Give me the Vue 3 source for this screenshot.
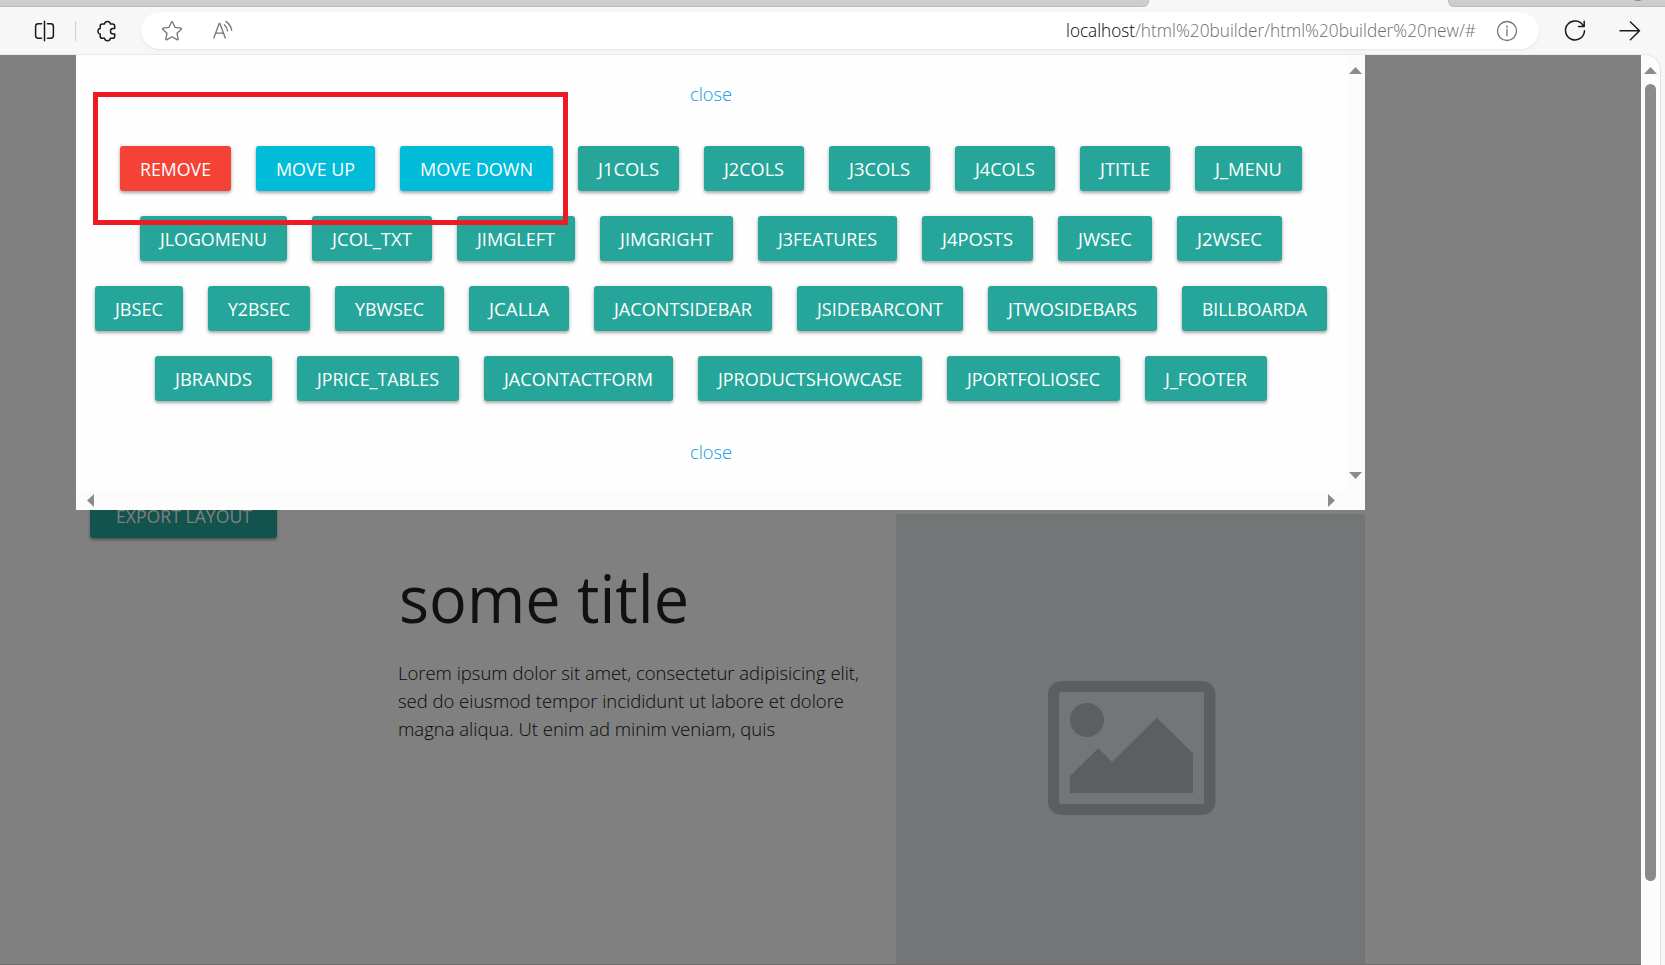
<script setup>
import { h } from 'vue'

const rows = [
  [['REMOVE', 111, 'red'], ['MOVE UP', 119, 'cyan'], ['MOVE DOWN', 153, 'cyan'], ['J1COLS', 101], ['J2COLS', 100], ['J3COLS', 101], ['J4COLS', 100], ['JTITLE', 90], ['J_MENU', 107]],
  [['JLOGOMENU', 147], ['JCOL_TXT', 120], ['JIMGLEFT', 118], ['JIMGRIGHT', 133], ['J3FEATURES', 139], ['J4POSTS', 111], ['JWSEC', 94], ['J2WSEC', 105]],
  [['JBSEC', 88], ['Y2BSEC', 102], ['YBWSEC', 109], ['JCALLA', 100], ['JACONTSIDEBAR', 178], ['JSIDEBARCONT', 166], ['JTWOSIDEBARS', 169], ['BILLBOARDA', 145]],
  [['JBRANDS', 117], ['JPRICE_TABLES', 162], ['JACONTACTFORM', 189], ['JPRODUCTSHOWCASE', 224], ['JPORTFOLIOSEC', 173], ['J_FOOTER', 122]],
]

const paragraph = [
  ['Lorem ipsum dolor sit amet, consectetur adipisicing elit,', 461],
  ['sed do eiusmod tempor incididunt ut labore et dolore', 446],
  ['magna aliqua. Ut enim ad minim veniam, quis', 377],
]

// A single line of text fitted to a fixed advance width.
const FitText = (props) =>
  h('svg', { width: props.w, height: props.h, class: 'fit' }, [
    h('text', { x: 0, y: props.base, textLength: props.w, lengthAdjust: 'spacingAndGlyphs', fill: 'currentColor' }, props.text),
  ])
FitText.props = ['text', 'w', 'h', 'base']
</script>

<template>
  <div class="browser">
    <div class="tabs">
      <div class="tab left"></div>
      <div class="tab right"><i class="tabdot"></i></div>
    </div>
    <header class="toolbar">
      <svg class="ico split" viewBox="0 0 24 24">
        <path d="M9.5 4.8H6.2Q3.6 4.8 3.6 7.4V16.6Q3.6 19.2 6.2 19.2H9.5M15.5 4.8H18.8Q21.4 4.8 21.4 7.4V16.6Q21.4 19.2 18.8 19.2H15.5M12.5 2.2V21.8" />
      </svg>
      <span class="sep"></span>
      <svg class="ico puzzle" viewBox="0 0 24 24">
        <path d="M5.2 7.2Q5.2 5.1 7.3 5.1H9.6C9.5 1.7 15.5 1.7 15.3 5.1H17.6Q19.7 5.1 19.7 7.2V9.6H18C14.6 9.6 14.6 15 18 15H19.7V17.2Q19.7 19.3 17.6 19.3H15.3C15.5 22.6 9.5 22.6 9.6 19.3H7.3Q5.2 19.3 5.2 17.2V14.9C2.2 15 2.2 9.5 5.2 9.6Z" />
      </svg>
      <div class="address">
        <svg class="ico star" viewBox="0 0 24 24">
          <path d="M12 2.7Q12.5 2.7 12.8 3.4L15.1 8.4L20.7 9.1Q22 9.4 21.1 10.4L17 14.2L18.1 19.8Q18.2 21.1 17 20.6L12 17.8L7 20.6Q5.8 21.1 5.9 19.8L7 14.2L2.9 10.4Q2 9.4 3.3 9.1L8.9 8.4L11.2 3.4Q11.5 2.7 12 2.7Z" />
        </svg>
        <svg class="ico read" viewBox="0 0 24 24">
          <path d="M3.8 19L9.2 4.5H9.9L15.3 19M5.7 14.2H13.4M14.3 5.8Q17 8 17.5 11.8M15.8 2.4Q20.8 5.6 21.7 11.3" />
        </svg>
        <div class="url">
          <FitText class="host" text="localhost" :w="69" :h="30" :base="21" />
          <FitText class="path" text="/html%20builder/html%20builder%20new/#" :w="341" :h="30" :base="21" />
        </div>
        <svg class="ico info" viewBox="0 0 24 24">
          <circle cx="12" cy="12" r="9.5" /><path d="M12 10.5V16.7M12 7V8.5" />
        </svg>
      </div>
      <svg class="ico reload" viewBox="0 0 24 24">
        <path d="M20.5 7.2A9.5 9.5 0 1 0 21.5 11.8M21.2 2.2V7.5H15.5" />
      </svg>
      <svg class="ico go" viewBox="0 0 24 24">
        <path d="M2 11.8H21.5M12.4 3L21.5 11.8L12.4 20.7" />
      </svg>
    </header>

    <div class="viewport">
      <main class="page">
        <section class="side">
          <div class="export"><FitText text="EXPORT LAYOUT" :w="136" :h="28" :base="21" /></div>
        </section>
        <section class="copy">
          <h1><FitText text="some title" :w="290" :h="80" :base="64" /></h1>
          <p><FitText v-for="l in paragraph" :key="l[0]" :text="l[0]" :w="l[1]" :h="28" :base="20" /></p>
        </section>
        <section class="photo">
          <svg width="168" height="134" viewBox="0 0 168 134">
            <path fill="#5d5e60" d="M0 13.5A13.5 13.5 0 0 1 13.5 0H154A13.5 13.5 0 0 1 167.5 13.5V120.500A13.500 13.500 0 0 1 154 134H13.500A13.500 13.500 0 0 1 0 120.500ZM11 13V121Q11 123 13 123H154Q156 123 156 121V13Q156 11 154 11H13Q11 11 11 13Z" fill-rule="evenodd" />
            <circle cx="39" cy="39" r="17" fill="#5d5e60" />
            <path fill="#5d5e60" d="M22 112V95L50.300 67.300L64 81L108.700 36.700L145 72.300V112Z" />
          </svg>
        </section>
      </main>

      <div class="scroll">
        <svg class="arrow" width="13" height="7"><path d="M0 7L6.500 0L13 7Z" /></svg>
        <div class="thumb"></div>
      </div>

      <div class="modal">
        <div class="content">
          <a class="close"><FitText text="close" :w="42" :h="28" :base="20" /></a>
          <div class="rows">
            <div v-for="(r, i) in rows" :key="i" class="row">
              <div v-for="b in r" :key="b[0]" class="btn" :class="b[2]">
                <FitText :text="b[0]" :w="b[1] - 40" :h="45" :base="30" />
              </div>
            </div>
          </div>
          <a class="close"><FitText text="close" :w="42" :h="28" :base="20" /></a>
        </div>
        <div class="vbar">
          <svg class="arrow" width="13" height="7"><path d="M0 7L6.500 0L13 7Z" /></svg>
          <svg class="arrow" width="13" height="7"><path d="M0 0L6.500 7L13 0Z" /></svg>
        </div>
        <div class="hbar">
          <svg class="arrow" width="7" height="13"><path d="M7 0L0 6.500L7 13Z" /></svg>
          <svg class="arrow" width="7" height="13"><path d="M0 0L7 6.500L0 13Z" /></svg>
        </div>
      </div>
      <div class="marker"></div>
    </div>
  </div>
</template>

<style>
body { overflow: hidden; }
</style>

<style scoped>
.browser {
  width: 1665px; height: 965px; box-sizing: border-box; overflow: hidden;
  display: flex; flex-direction: column; background: #f7f7f7;
  font-family: "Open Sans", "Noto Sans", sans-serif; font-size: 18px;
}
.fit { display: block; overflow: visible; flex: none; }
.tabs { display: flex; justify-content: space-between; height: 7px; }
.tab { background: #cdcdcd; border-bottom: 1px solid #bcbcbc; box-sizing: border-box; overflow: hidden; }
.left { width: 1149px; border-right: 1px solid #bcbcbc; border-radius: 0 0 6px 0; }
.right { width: 217px; border-left: 1px solid #bcbcbc; border-radius: 0 0 0 6px; display: flex; justify-content: flex-end; }
.tabdot { width: 12px; height: 8px; margin: -7px 21px 0 0; border-radius: 50%; background: #858585; }
.toolbar { height: 48px; display: flex; align-items: center; flex: none; }
.ico { width: 24px; height: 24px; flex: none; fill: none; stroke: #1b1b1b; stroke-width: 1.5; stroke-linejoin: round; stroke-linecap: round; }
.split { margin-left: 32px; }
.sep { width: 1px; height: 20px; background: #cfcfcf; margin: 0 19px; }
.puzzle { margin-right: 22px; }
.address {
  width: 1398px; height: 37px; margin-top: -1px; box-sizing: border-box; border-radius: 19px; background: #fff;
  display: flex; align-items: center; padding: 0 20px 0 19px; box-shadow: 0 1px 3px rgba(0, 0, 0, .08);
}
.star, .read, .info { stroke: #757575; stroke-width: 1.3; }
.read { margin-left: 26px; }
.url { display: flex; margin-left: auto; margin-right: 19px; font-weight: 350; }
.host { color: #000; }
.path { color: #6c6c6c; }
.reload { margin-left: 24px; }
.go { margin-left: 31px; }

.viewport { position: relative; height: 910px; width: 1661px; display: flex; box-sizing: border-box; border-right: 1px solid #e3e3e3; border-top-right-radius: 16px; overflow: hidden; box-shadow: 0 -1px 1px #e8e8e8; }
.page { width: 1641px; background: #808080; display: flex; box-sizing: border-box; border-bottom: 1px solid #6e6e6e; }
.side { width: 308px; margin-left: 90px; padding-top: 429px; }
.export { width: 187px; height: 54px; box-sizing: border-box; padding: 18px 26px; background: #13534d; color: #808080; border-radius: 3px; box-shadow: 0 2px 3px rgba(0, 0, 0, .35); }
.copy { width: 498px; padding-top: 504px; }
h1 { margin: 0 0 0 1px; color: #111; font-size: 65px; font-weight: 400; }
p { margin: 21px 0 0; color: #080808; font-size: 18.5px; font-weight: 350; }
.photo { width: 469px; margin-top: 459px; background: #727677; padding: 167px 0 0 152px; box-sizing: border-box; }

.scroll { width: 19px; background: #fcfcfc; display: flex; flex-direction: column; align-items: center; padding-top: 12px; box-sizing: border-box; }
.arrow { display: block; fill: #8b8b8b; flex: none; }
.thumb { width: 11px; height: 797px; margin-top: 10px; border-radius: 6px; background: #8b8b8b; }

.modal {
  position: absolute; left: 76px; top: 0; width: 1289px; height: 455px; background: #fcfcfc;
  display: grid; grid-template-columns: 1270px 19px; grid-template-rows: 436px 19px;
}
.content { background: #fefefe; display: flex; flex-direction: column; align-items: center; padding-top: 26px; box-sizing: border-box; }
.close { color: #039be5; font-size: 18.5px; font-weight: 350; }
.rows { margin: 37px 0 38px; display: flex; flex-direction: column; gap: 25px; }
.row { display: flex; justify-content: center; gap: 25px; }
.btn { padding: 0 20px; height: 45px; border-radius: 3px; background: #26a69a; color: #fff; box-shadow: 0 2px 3px rgba(0, 0, 0, .25), 0 1px 5px rgba(0, 0, 0, .16); }
.red { background: #f44336; }
.cyan { background: #00bcd9; }
.vbar { display: flex; flex-direction: column; justify-content: space-between; align-items: center; padding: 12px 0; }
.hbar { display: flex; justify-content: space-between; align-items: center; padding: 0 11px; }
.marker { position: absolute; left: 93px; top: 37px; width: 475px; height: 133px; box-sizing: border-box; border: 5px solid #ed1c24; }
</style>
